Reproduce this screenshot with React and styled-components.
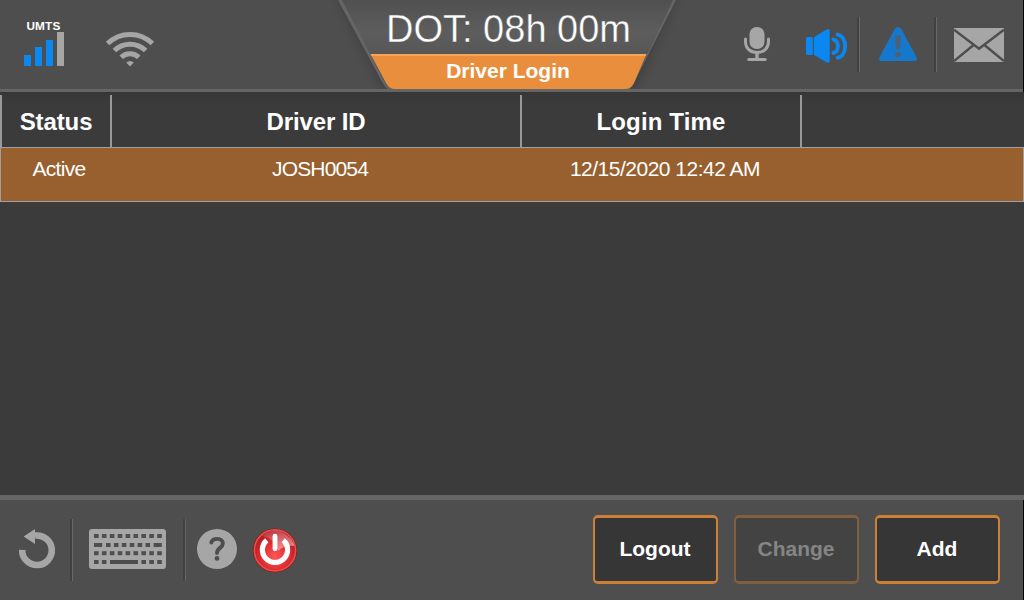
import React from "react";
import styled, { createGlobalStyle, css } from "styled-components";

const c = {
  bar: "#4e4e4e",
  line: "#656565",
  body: "#3b3b3b",
  icon: "#a6a6a6",
  blue: "#0a87f0",
  orange: "#e98e3c",
  rule: "#a0a0a0",
};

const Global = createGlobalStyle`
  * { box-sizing: border-box; }
  body { margin: 0; background: ${c.body}; }
`;

const Screen = styled.div`
  width: 1024px;
  height: 600px;
  display: flex;
  flex-direction: column;
  overflow: hidden;
  background: ${c.body};
  color: #fff;
  font-family: "Liberation Sans", Arial, sans-serif;
  white-space: nowrap;
`;

const Header = styled.header`
  height: 92px;
  display: flex;
  align-items: flex-start;
  background: linear-gradient(${c.bar} 0 89px, ${c.line} 89px);
  border-right: 1px solid #050505;
`;

const HeaderLeft = styled.div`
  width: 320px;
  height: 89px;
  display: flex;
  align-items: flex-start;
  padding-left: 24px;
`;

const Signal = styled.div`
  width: 40px;
  padding-top: 20px;
`;

const Network = styled.div`
  height: 12px;
  margin: 0 -4px 0 -5px;
  text-align: center;
  font: bold 11.8px/12px "Liberation Sans", Arial, sans-serif;
  letter-spacing: 0.2px;
`;

const Bars = styled.div`
  height: 34px;
  display: flex;
  align-items: flex-end;
  gap: 4px;
`;

const Bar = styled.i`
  width: 7px;
  height: ${(p) => p.$h}px;
  background: ${(p) => (p.$on ? c.blue : c.icon)};
`;

const Icon = styled.svg`
  display: block;
  flex: none;
  width: ${(p) => p.$w}px;
  height: ${(p) => p.$h}px;
  margin: ${(p) => p.$m || 0};
`;

const TitleTab = styled.div`
  width: 376px;
  height: 92px;
  position: relative;
  text-align: center;
`;

const TabShape = styled.svg`
  position: absolute;
  inset: 0;
  display: block;
`;

const Clock = styled.div`
  position: relative;
  height: 54px;
  padding-left: 1px;
  font-size: 38px;
  line-height: 58px;
  -webkit-text-stroke: 0.4px #5a5a5a;
`;

const Title = styled.div`
  position: relative;
  height: 35px;
  font-weight: bold;
  font-size: 21px;
  line-height: 34px;
`;

const HeaderRight = styled.div`
  flex: 1;
  display: flex;
  align-items: flex-start;
`;

const Divider = styled.i`
  flex: none;
  width: 3px;
  height: ${(p) => p.$h}px;
  margin: ${(p) => p.$m};
  background: linear-gradient(90deg, #414141 0 2px, #686868 2px);
`;

const Table = styled.main`
  flex: 1;
  padding-top: 3px;
  background: linear-gradient(#373737, ${c.body} 12px);
`;

const columns = css`
  display: grid;
  grid-template-columns: 110px 410px 280px 1fr;
  text-align: center;
`;

const HeadRow = styled.div`
  ${columns}
  height: 52px;
  font-weight: bold;
  font-size: 24px;
  line-height: 54px;
`;

const HeadCell = styled.div`
  height: 52px;
  border-left: 2px solid #999;
  letter-spacing: ${(p) => p.$ls || 0}px;
`;

const Row = styled.div`
  ${columns}
  height: 55px;
  background: #98602f;
  border: 1px solid ${c.rule};
  font-size: 21px;
  line-height: 41px;
`;

const Cell = styled.div`
  padding-left: ${(p) => p.$pl || 0}px;
  letter-spacing: ${(p) => p.$ls || 0}px;
`;

const Footer = styled.footer`
  height: 105px;
  display: flex;
  align-items: flex-start;
  background: ${c.bar};
  border-top: 5px solid ${c.line};
  box-shadow: inset -1px 0 #050505;
`;

const Actions = styled.div`
  margin: 15px 24px 0 auto;
  display: flex;
  gap: 16px;
`;

const Button = styled.button`
  width: 125px;
  height: 69px;
  padding: 0 1px 2px 0;
  border: solid #cb8038;
  border-width: 3px 2px;
  border-radius: 5px;
  background: #363636;
  color: #fff;
  font: bold 21px "Liberation Sans", Arial, sans-serif;
  &:disabled {
    border-color: #80603f;
    background: #434343;
    color: #858585;
  }
`;

function TabBackground() {
  return (
    <TabShape width="376" height="92" viewBox="0 0 376 92">
      <defs>
        <linearGradient id="tab" x1="0" y1="0" x2="0" y2="1">
          <stop offset="0" stopColor="#505050" />
          <stop offset=".35" stopColor="#5d5d5d" />
          <stop offset=".6" stopColor="#575757" />
        </linearGradient>
        <filter id="soft" x="-20%" y="-20%" width="140%" height="140%">
          <feGaussianBlur stdDeviation="7" />
        </filter>
        <clipPath id="bar"><path d="M0 0H376V89H0z" /></clipPath>
      </defs>
      <g clipPath="url(#bar)">
        <path d="M18 -10 66 89H312L356 -10z" fill="#000" opacity=".3" filter="url(#soft)" />
      </g>
      <path d="M18 0 61.5 81Q66 89 72 92H306Q311 89 315 81L356 0z" fill={c.line} />
      <path d="M22 0 65 83Q68 89 75 89H305Q311 89 314 83L353 0z" fill="url(#tab)" />
      <path d="M50.5 54 66 83Q69 89 75 89H305Q311 89 314 83L326.5 54z" fill={c.orange} />
      <path d="M50.5 54H326.5L325.6 56H51.6z" fill="#f8a454" />
    </TabShape>
  );
}

function Wifi() {
  return (
    <Icon $w={50} $h={36} $m="31px 0 0 41px" viewBox="0 0 50 36" fill="none" stroke={c.icon} strokeWidth="5">
      <path d="M2.6 12.6C15 .3 35 .3 47.4 12.6" />
      <path d="M9.4 19.5C18 11 32 11 40.6 19.5" />
      <path d="M16.2 26.3C21 21.4 29 21.4 33.8 26.3" />
      <path d="M21.2 31.6Q25 28.4 28.8 31.6L25 35.4z" fill={c.icon} stroke="none" />
    </Icon>
  );
}

function Mic() {
  return (
    <Icon $w={28} $h={36} $m="26px 0 0 47px" viewBox="0 0 28 36" fill="none" stroke={c.icon} strokeLinecap="round">
      <rect x="6.5" y="1" width="15" height="22" rx="7.2" fill={c.icon} stroke="none" />
      <path d="M2.5 13V15.5C2.5 22.5 7.4 26.5 14 26.5S25.5 22.5 25.5 15.5V13" strokeWidth="3" />
      <path d="M14 27V33" strokeWidth="3.4" />
      <path d="M5.8 33.5H22.2" strokeWidth="3" />
    </Icon>
  );
}

function Speaker() {
  return (
    <Icon $w={43} $h={36} $m="28px 0 0 34px" viewBox="0 0 43 36" fill={c.blue}>
      <rect x="1" y="9" width="6.8" height="18" rx="1.4" />
      <path d="M8.8 9.3 21.5 1.4Q24.7 .2 24.7 3V33Q24.7 35.6 21.7 34.5L8.8 26.7z" />
      <g fill="none" stroke={c.blue} strokeLinecap="round" strokeWidth="3.9">
        <path d="M28.4 11.4C34.4 13.2 34.4 23.3 28.4 25" />
        <path d="M32.6 6.6C42.6 9 42.6 27.2 32.6 29.8" />
      </g>
    </Icon>
  );
}

function Warning() {
  return (
    <Icon $w={40} $h={36} $m="26px 0 0 18px" viewBox="0 0 40 36">
      <path d="M16.8 2.8Q20 -.8 23.2 2.8L38.4 31Q40 35 36 35H4Q0 35 1.6 31z" fill="#1678cc" />
      <path d="M17.3 10H22.7L21.6 23H18.4z" fill="#4a6178" stroke="#50606e" strokeWidth=".6" />
      <circle cx="20" cy="28.5" r="2.8" fill="#50606e" />
    </Icon>
  );
}

function Mail() {
  return (
    <Icon $w={50} $h={34} $m="28px 0 0 17px" viewBox="0 0 50 34">
      <path d="M0 0H50V34H0z" fill={c.icon} />
      <path d="M0 1.8 25 20.8 50 1.8M0 33 19.6 17M50 33 30.4 17" fill="none" stroke={c.bar} strokeWidth="2.5" />
    </Icon>
  );
}

function Back() {
  return (
    <Icon $w={38} $h={41} $m="28px 0 0 18px" viewBox="0 0 38 41">
      <path d="M4.2 21.8A14.8 14.8 0 1 0 17 7.6" fill="none" stroke={c.icon} strokeWidth="6.6" />
      <path d="M5.6 8.6 17 1V16z" fill={c.icon} />
    </Icon>
  );
}

const keyRows = [
  [0, 1, 2, 3, 4, 5, 6, 7, 8].map((i) => [5 + i * 7.9, 5, 4.6]),
  [[5, 14, 8.2], ...[0, 1, 2, 3, 4, 5].map((i) => [17 + i * 7.9, 14, 4.6]), [64.6, 14, 8.2]],
  [0, 1, 2, 3, 4, 5, 6, 7, 8].map((i) => [5 + i * 7.9, 22.2, 4.6]),
  [[5, 31, 4.6], [12.9, 31, 4.6], [21, 31, 28], [52.4, 31, 4.6], [60.3, 31, 4.6], [68.2, 31, 4.6]],
];

function Keyboard() {
  return (
    <Icon $w={77} $h={40} $m="29px 0 0 16px" viewBox="0 0 77 40">
      <rect width="77" height="40" rx="3" fill={c.icon} />
      {keyRows.flat().map(([x, y, w]) => (
        <rect key={`${x}-${y}`} x={x} y={y} width={w} height="4" fill={c.bar} />
      ))}
    </Icon>
  );
}

function Help() {
  return (
    <Icon $w={40} $h={40} $m="29px 0 0 11px" viewBox="0 0 40 40">
      <circle cx="20" cy="20" r="20" fill={c.icon} />
      <path d="M14.3 13.6C15.6 8.6 25.8 8.4 25.8 14.4 25.8 19 20 18.8 20 24" fill="none" stroke={c.bar} strokeWidth="3.9" strokeLinecap="round" />
      <circle cx="20" cy="29.4" r="2.4" fill={c.bar} />
    </Icon>
  );
}

function Power() {
  return (
    <Icon $w={46} $h={46} $m="27px 0 0 15px" viewBox="0 0 46 46">
      <defs>
        <radialGradient id="red" cx=".5" cy=".65" r=".6">
          <stop offset="0" stopColor="#ff5656" />
          <stop offset=".5" stopColor="#e23236" />
          <stop offset="1" stopColor="#b51620" />
        </radialGradient>
        <linearGradient id="shine" x1="0" y1="0" x2="1" y2="1">
          <stop offset="0" stopColor="#fff" stopOpacity=".1" />
          <stop offset="1" stopColor="#fff" stopOpacity=".5" />
        </linearGradient>
      </defs>
      <circle cx="23" cy="23.4" r="22" fill="#8e1712" />
      <circle cx="23" cy="23.4" r="20.6" fill="url(#red)" stroke="#e5504d" strokeWidth="1.6" />
      <path d="M10 9Q23 -2 34.5 8Q41 13 42.5 19Q32 18 26 24Q24 12 10 9z" fill="url(#shine)" />
      <path d="M14.8 13.2A12.6 12.6 0 1 0 31.2 13.2" fill="none" stroke="#fff" strokeWidth="5.2" />
      <path d="M23 9.2V21.8" stroke="#fff" strokeWidth="4.8" strokeLinecap="round" />
    </Icon>
  );
}

export default function App() {
  return (
    <Screen>
      <Global />
      <Header>
        <HeaderLeft>
          <Signal>
            <Network>UMTS</Network>
            <Bars>
              <Bar $h={11} $on />
              <Bar $h={19} $on />
              <Bar $h={26} $on />
              <Bar $h={34} />
            </Bars>
          </Signal>
          <Wifi />
        </HeaderLeft>
        <TitleTab>
          <TabBackground />
          <Clock>DOT: 08h 00m</Clock>
          <Title>Driver Login</Title>
        </TitleTab>
        <HeaderRight>
          <Mic />
          <Speaker />
          <Divider $h={55} $m="17px 0 0 9px" />
          <Warning />
          <Divider $h={55} $m="17px 0 0 16px" />
          <Mail />
        </HeaderRight>
      </Header>
      <Table>
        <HeadRow>
          <HeadCell $ls={-0.1}>Status</HeadCell>
          <HeadCell $ls={-0.1}>Driver ID</HeadCell>
          <HeadCell $ls={0.15}>Login Time</HeadCell>
          <HeadCell />
        </HeadRow>
        <Row>
          <Cell $pl={6} $ls={-0.7}>Active</Cell>
          <Cell $pl={8} $ls={-0.85}>JOSH0054</Cell>
          <Cell $pl={8} $ls={-0.5}>12/15/2020 12:42 AM</Cell>
          <Cell />
        </Row>
      </Table>
      <Footer>
        <Back />
        <Divider $h={62} $m="19px 0 0 14px" />
        <Keyboard />
        <Divider $h={62} $m="19px 0 0 17px" />
        <Help />
        <Power />
        <Actions>
          <Button>Logout</Button>
          <Button disabled>Change</Button>
          <Button>Add</Button>
        </Actions>
      </Footer>
    </Screen>
  );
}
